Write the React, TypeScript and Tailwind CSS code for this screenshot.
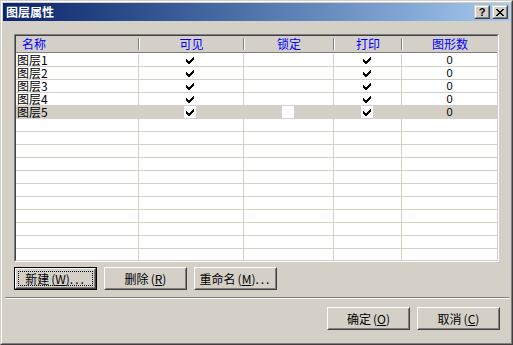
import React from 'react';
import clsx from 'clsx';

const FONT = "font-['Noto_Sans_CJK_SC','Liberation_Sans',sans-serif]";

const cols = [
  { label: '名称', w: 'w-[123px]', align: 'justify-start pl-[6px]' },
  { label: '可见', w: 'w-[105px]', align: 'justify-center' },
  { label: '锁定', w: 'w-[90px]', align: 'justify-center' },
  { label: '打印', w: 'w-[68px]', align: 'justify-center' },
  { label: '图形数', w: 'w-[95px]', align: 'justify-center' },
];

interface Layer {
  name: string
  visible: boolean
  locked: boolean
  print: boolean
  count: number
}

const layers: Layer[] = [
  { name: '图层1', visible: true, locked: false, print: true, count: 0 },
  { name: '图层2', visible: true, locked: false, print: true, count: 0 },
  { name: '图层3', visible: true, locked: false, print: true, count: 0 },
  { name: '图层4', visible: true, locked: false, print: true, count: 0 },
  { name: '图层5', visible: true, locked: false, print: true, count: 0 },
];

// bold pixel check glyph
const checkPixels = [
  '.......X',
  '......XX',
  'X....XXX',
  'XX..XXX.',
  'XXXXXX..',
  '.XXXX...',
  '..XX....',
];

function Check() {
  return (
    <svg width="8" height="7" viewBox="0 0 8 7" shapeRendering="crispEdges">
      {checkPixels.map((row, y) =>
        row.split('').map((c, x) => (c === 'X' ? <rect key={`${x}-${y}`} x={x} y={y} width="1" height="1" fill="#000" /> : null))
      )}
    </svg>
  )
}

const closePixels = [
  'XX....XX',
  '.XX..XX.',
  '..XXXX..',
  '...XX...',
  '..XXXX..',
  '.XX..XX.',
  'XX....XX',
];

function CaptionButton({ children }: { children: React.ReactNode }) {
  return (
    <div className="h-[14px] w-[16px] border border-t-[#d4d0c8] border-l-[#d4d0c8] border-r-[#404040] border-b-[#404040]">
      <div className="flex h-full w-full items-center justify-center border border-t-white border-l-white border-r-[#808080] border-b-[#808080] bg-[#d4d0c8]">
        {children}
      </div>
    </div>
  )
}

function Button({ children, isDefault }: { children: React.ReactNode; isDefault?: boolean }) {
  return (
    <div className={clsx('h-[23px] w-[83px] shrink-0', isDefault && 'border border-black')}>
      <div className="h-full w-full border border-t-white border-l-white border-r-[#404040] border-b-[#404040]">
        <div className="flex h-full w-full items-center justify-center border border-t-[#d4d0c8] border-l-[#d4d0c8] border-r-[#808080] border-b-[#808080] text-[12px] leading-[12px] text-black">
          {isDefault ? (
            <div className="m-[1px] flex h-[calc(100%-2px)] w-[calc(100%-2px)] items-center justify-center border border-dotted border-black">
              {children}
            </div>
          ) : (
            children
          )}
        </div>
      </div>
    </div>
  )
}

function Label({ text, hot, dots }: { text: string; hot: string; dots?: boolean }) {
  return (
    <span className="whitespace-nowrap">
      {text}
      <span className="ml-[2px]">(<span className="underline">{hot}</span>)</span>
      {dots && <span className="tracking-[2px]">...</span>}
    </span>
  )
}

function Cell({ w, children, last, className }: { w: string; children?: React.ReactNode; last?: boolean; className?: string }) {
  return (
    <div className={clsx('flex h-full items-center', w, !last && 'border-r border-[#d4d0c8]', className)}>
      {children}
    </div>
  )
}

function Box({ children }: { children?: React.ReactNode }) {
  return <div className="flex h-[12px] w-[12px] items-center justify-center bg-white">{children}</div>
}

export default function App() {
  const emptyRows = 11

  return (
    <div className={clsx('h-[345px] w-[513px] border border-t-[#d4d0c8] border-l-[#d4d0c8] border-r-[#404040] border-b-[#404040]', FONT)}>
      <div className="h-full w-full border border-t-white border-l-white border-r-[#808080] border-b-[#808080]">
        <div className="flex h-full w-full flex-col bg-[#d4d0c8] p-[1px]">
          {/* title bar */}
          <div className="flex h-[18px] shrink-0 items-center justify-between bg-gradient-to-r from-[#0a246a] to-[#a6caf0] pl-[3px] pr-[2px]">
            <span className="text-[12px] font-bold leading-[12px] text-white">图层属性</span>
            <div className="flex gap-[2px]">
              <CaptionButton>
                <span className="font-['Liberation_Sans',sans-serif] text-[11px] font-bold leading-[11px] text-black">?</span>
              </CaptionButton>
              <CaptionButton>
                <svg width="8" height="7" viewBox="0 0 8 7" shapeRendering="crispEdges">
                  {closePixels.map((row, y) =>
                    row.split('').map((c, x) => (c === 'X' ? <rect key={`${x}-${y}`} x={x} y={y} width="1" height="1" fill="#000" /> : null))
                  )}
                </svg>
              </CaptionButton>
            </div>
          </div>

          {/* list view */}
          <div className="ml-[11px] mt-[13px] h-[228px] w-[485px] border border-t-[#808080] border-l-[#808080] border-r-white border-b-white">
            <div className="h-full w-full overflow-hidden border border-t-[#404040] border-l-[#404040] border-r-[#d4d0c8] border-b-[#d4d0c8] bg-white">
              <div className="flex h-[17px] border-b border-[#808080] bg-[#d4d0c8] text-[12px] leading-[12px] text-[#0000ff]">
                {cols.map((c, i) => (
                  <div key={c.label} className={clsx('flex h-full', c.w)}>
                    {i > 0 && <div className="my-[2px] w-px bg-white" />}
                    <div className={clsx('flex flex-1 items-center', c.align)}>{c.label}</div>
                    {i < cols.length - 1 && <div className="my-[2px] w-px bg-[#808080]" />}
                  </div>
                ))}
              </div>
              <div className="pt-[1px] text-[12px] leading-[12px] text-black">
                {layers.map((l, i) => {
                  const selected = i === layers.length - 1
                  return (
                    <div key={l.name} className={clsx('flex h-[13px] border-b border-[#d4d0c8]', selected && 'bg-[#d4d0c8]')}>
                      <Cell w="w-[123px]" className="pl-[1px]">{l.name}</Cell>
                      <Cell w="w-[105px]" className="justify-center pr-[2px]">
                        {selected ? <Box>{l.visible && <Check />}</Box> : l.visible && <Check />}
                      </Cell>
                      <Cell w="w-[90px]" className="justify-center pr-[2px]">
                        {selected ? <Box>{l.locked && <Check />}</Box> : l.locked && <Check />}
                      </Cell>
                      <Cell w="w-[68px]" className="justify-center pr-[2px]">
                        {selected ? <Box>{l.print && <Check />}</Box> : l.print && <Check />}
                      </Cell>
                      <Cell w="w-[95px]" last className="justify-center font-['Liberation_Sans',sans-serif] text-[11px] leading-[11px]">
                        {l.count}
                      </Cell>
                    </div>
                  )
                })}
                {Array.from({ length: emptyRows }).map((_, i) => (
                  <div key={i} className="flex h-[13px] border-b border-[#d4d0c8]">
                    <Cell w="w-[123px]" />
                    <Cell w="w-[105px]" />
                    <Cell w="w-[90px]" />
                    <Cell w="w-[68px]" />
                    <Cell w="w-[95px]" last />
                  </div>
                ))}
              </div>
            </div>
          </div>

          {/* list buttons */}
          <div className="ml-[11px] mt-[5px] flex gap-[7px]">
            <Button isDefault><Label text="新建" hot="W" dots /></Button>
            <Button><Label text="删除" hot="R" /></Button>
            <Button><Label text="重命名" hot="M" dots /></Button>
          </div>

          {/* separator */}
          <div className="ml-[2px] mr-[1px] mt-[7px] border-t border-b border-t-[#808080] border-b-white" />

          {/* dialog buttons */}
          <div className="mt-[8px] flex justify-end gap-[7px] pr-[10px]">
            <Button><Label text="确定" hot="O" /></Button>
            <Button><Label text="取消" hot="C" /></Button>
          </div>
        </div>
      </div>
    </div>
  )
}
